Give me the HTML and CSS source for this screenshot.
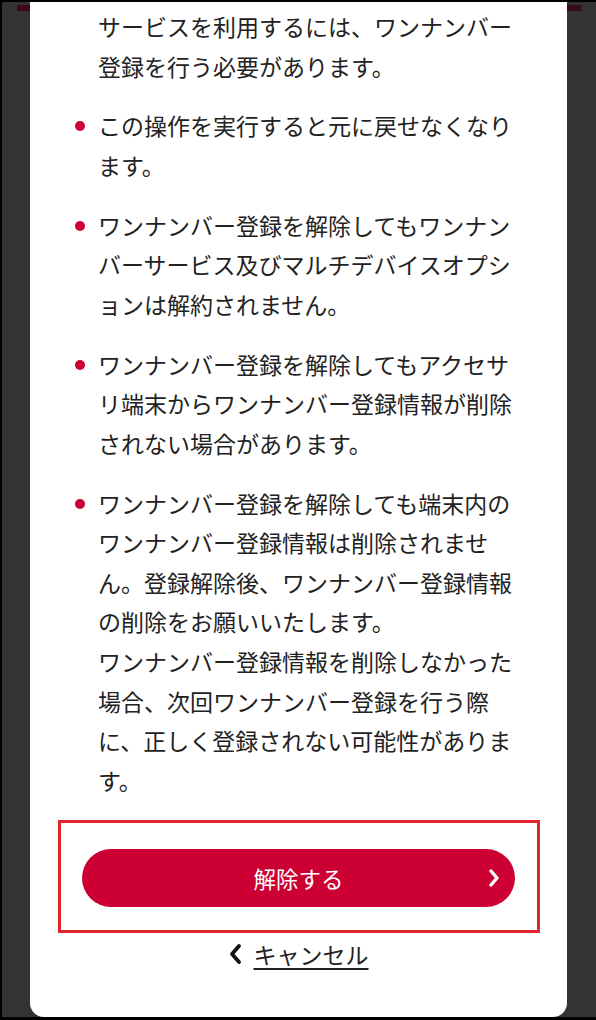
FILE: index.html
```html
<!DOCTYPE html>
<html lang="ja">
<head>
<meta charset="utf-8">
<link rel="stylesheet" href="styles.css">
</head>
<body>
<div class="screen">
  <div class="backdrop-bar"></div>
  <div class="sheet">
    <ul class="notes">
      <li class="note note-cont">サービスを利用するには、ワンナンバー登録を行う必要があります。</li>
      <li class="note">この操作を実行すると元に戻せなくなります。</li>
      <li class="note">ワンナンバー登録を解除してもワンナンバーサービス及びマルチデバイスオプションは解約されません。</li>
      <li class="note">ワンナンバー登録を解除してもアクセサリ端末からワンナンバー登録情報が削除されない場合があります。</li>
      <li class="note">ワンナンバー登録を解除しても端末内のワンナンバー登録情報は削除されません。登録解除後、ワンナンバー登録情報の削除をお願いいたします。<br>ワンナンバー登録情報を削除しなかった場合、次回ワンナンバー登録を行う際に、正しく登録されない可能性があります。</li>
    </ul>
    <div class="highlight">
      <button class="primary">
        <span>解除する</span>
        <svg class="chev-right" width="14" height="22" viewBox="0 0 14 22"><path d="M4 4 L10 11 L4 18" fill="none" stroke="#fff" stroke-width="3.4" stroke-linecap="round" stroke-linejoin="round"/></svg>
      </button>
    </div>
    <div class="cancel-row">
      <svg class="chev-left" width="16" height="24" viewBox="0 0 16 24"><path d="M12 4 L5 12 L12 20" fill="none" stroke="#111" stroke-width="3.8" stroke-linecap="round" stroke-linejoin="round"/></svg>
      <a class="cancel">キャンセル</a>
    </div>
  </div>
</div>
</body>
</html>
```

FILE: styles.css
```css
html, body {
  margin: 0;
  padding: 0;
  background: #000;
}
body {
  width: 596px;
  height: 1020px;
  overflow: hidden;
  font-family: "Noto Sans CJK JP", "Noto Sans", sans-serif;
  color: #222;
}
.screen {
  position: relative;
  box-sizing: border-box;
  width: 596px;
  height: 1020px;
  border-top: 2px solid #000;
  border-left: 2px solid #000;
  border-bottom: 3px solid #000;
  background: #333333;
  overflow: hidden;
}
.backdrop-bar {
  position: absolute;
  left: 15px;
  right: 14px;
  top: 3px;
  height: 6px;
  background: #3c0a16;
}
.sheet {
  position: relative;
  box-sizing: border-box;
  margin-left: 28px;
  width: 537px;
  height: 1015px;
  background: #fff;
  border-radius: 0 0 14px 14px;
  padding: 5px 27px 0 28px;
}
.notes {
  list-style: none;
  margin: 0;
  padding: 0;
  width: 460px;
}
.note {
  position: relative;
  padding-left: 40px;
  font-size: 23px;
  line-height: 39.6px;
  margin-bottom: 20.2px;
}
.note::before {
  content: "";
  position: absolute;
  left: 17px;
  top: 15px;
  width: 10px;
  height: 10px;
  border-radius: 50%;
  background: #cc0033;
}
.note-cont::before {
  display: none;
}
.note:last-child {
  margin-bottom: 0;
}
.highlight {
  margin-top: 20px;
  border: 3px solid #e3262d;
  padding: 26px 22px 23px 21px;
}
.primary {
  position: relative;
  display: flex;
  align-items: center;
  justify-content: center;
  width: 100%;
  height: 58px;
  border: none;
  border-radius: 29px;
  background: #cc0033;
  color: #fff;
  font-family: "Noto Sans CJK JP", "Noto Sans", sans-serif;
  font-size: 22.5px;
  padding: 0;
}
.chev-right {
  position: absolute;
  right: 14px;
  top: 18px;
}
.cancel-row {
  display: flex;
  align-items: center;
  justify-content: center;
  gap: 11px;
  margin-top: 3px;
  margin-left: -3px;
}
.cancel {
  font-size: 23px;
  line-height: 36px;
  color: #222;
  text-decoration: underline;
  text-underline-offset: 4px;
  text-decoration-thickness: 2px;
}
```
